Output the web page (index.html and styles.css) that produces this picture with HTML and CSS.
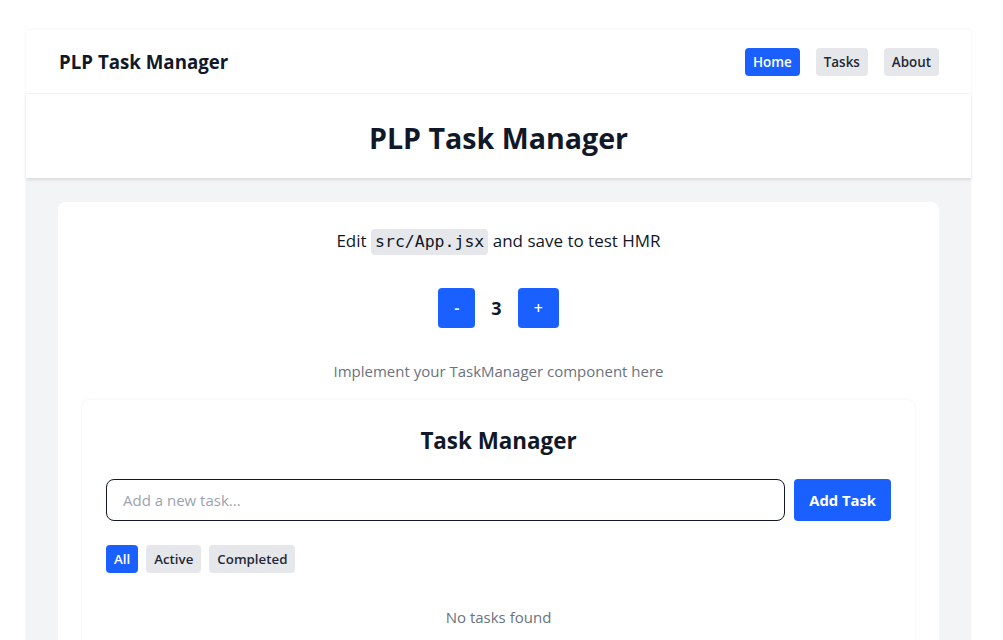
FILE: index.html
```html
<!DOCTYPE html>
<html lang="en">
<head>
<meta charset="utf-8">
<title>PLP Task Manager</title>
<link rel="stylesheet" href="styles.css">
</head>
<body>
<div class="app">
  <nav class="navbar">
    <div class="brand">PLP Task Manager</div>
    <div class="nav-links">
      <button class="btn-sm primary">Home</button>
      <button class="btn-sm secondary">Tasks</button>
      <button class="btn-sm secondary">About</button>
    </div>
  </nav>
  <header class="hero">
    <h1>PLP Task Manager</h1>
  </header>
  <main class="main">
    <section class="card">
      <p class="edit">Edit <code>src/App.jsx</code> and save to test HMR</p>
      <div class="counter">
        <button class="btn primary">-</button>
        <span class="count">3</span>
        <button class="btn primary">+</button>
      </div>
      <p class="hint">Implement your TaskManager component here</p>
      <div class="tm">
        <h2>Task Manager</h2>
        <form class="add-row">
          <input class="task-input" type="text" placeholder="Add a new task...">
          <button type="button" class="btn primary add">Add Task</button>
        </form>
        <div class="filters">
          <button class="btn-sm primary">All</button>
          <button class="btn-sm secondary">Active</button>
          <button class="btn-sm secondary">Completed</button>
        </div>
        <p class="empty">No tasks found</p>
      </div>
    </section>
  </main>
</div>
</body>
</html>
```
FILE: styles.css
```css
* { box-sizing: border-box; }
html, body { margin: 0; padding: 0; background: #fff; }
body {
  font-family: "Open Sans", "Noto Sans", sans-serif;
  color: #111827;
  font-size: 15px;
  line-height: 24px;
  padding: 30px 32px 0 26px;
}
button { font-family: inherit; border: 0; cursor: pointer; }
.app {
  background: #f3f4f6;
  box-shadow: 0 0 3px rgba(0,0,0,0.06);
  min-height: 640px;
}
.navbar {
  background: #fff;
  height: 64px;
  padding: 0 32px 0 33px;
  display: flex;
  align-items: center;
  justify-content: space-between;
  border-bottom: 1px solid #f3f4f6;
}
.brand { font-size: 18.7px; font-weight: 700; margin-top: 1px; }
.nav-links { display: flex; gap: 16px; margin-top: 1px; }
.btn-sm {
  font-size: 13.4px;
  line-height: 20px;
  font-weight: 600;
  padding: 4px 8px;
  border-radius: 4px;
}
.primary { background: #1a5fff; color: #fff; }
.secondary { background: #e5e7eb; color: #1f2937; }
.hero {
  background: #fff;
  padding: 26px 0 22px;
  text-align: center;
  box-shadow: 0 2px 3px rgba(0,0,0,0.1);
  position: relative;
}
.hero h1 { margin: 0; font-size: 28.6px; line-height: 36px; font-weight: 700; }
.main { padding: 24px 32px; }
.card {
  background: #fff;
  border-radius: 8px;
  padding: 24px;
  text-align: center;
}
.edit { margin: 0; line-height: 30px; font-size: 17px; }
.edit code {
  font-family: "DejaVu Sans Mono", "Liberation Mono", monospace;
  font-size: 16.5px;
  background: #e5e7eb;
  padding: 3px 4px 4px;
  border-radius: 4px;
}
.counter {
  margin-top: 31px;
  display: flex;
  justify-content: center;
  align-items: center;
  gap: 16px;
}
.btn {
  font-size: 16px;
  line-height: 24px;
  font-weight: 600;
  padding: 8px 16px;
  border-radius: 4px;
}
.count { font-size: 18px; font-weight: 700; }
.hint { margin: 31px 0 0; color: #6b7280; }
.tm {
  margin-top: 17px;
  background: #fff;
  border-radius: 8px;
  box-shadow: 0 0 3px rgba(0,0,0,0.07);
  padding: 24px;
  min-height: 260px;
}
.tm h2 { margin: 0 0 22px; padding-top: 1px; font-size: 22.4px; line-height: 32px; font-weight: 700; }
.add-row { display: flex; gap: 9px; }
.task-input {
  flex: 1;
  font-family: inherit;
  font-size: 15px;
  line-height: 24px;
  padding: 8px 16px;
  border: 1px solid #111827;
  border-radius: 8px;
  color: #111827;
  outline: none;
}
.task-input::placeholder { color: #9ca3af; }
.add { padding: 9px 15px; font-size: 14.8px; font-weight: 700; }
.filters { display: flex; gap: 8px; margin-top: 24px; }
.filters .btn-sm { font-size: 13.3px; }
.empty { margin: 32px 0 0; color: #6b7280; }
```
